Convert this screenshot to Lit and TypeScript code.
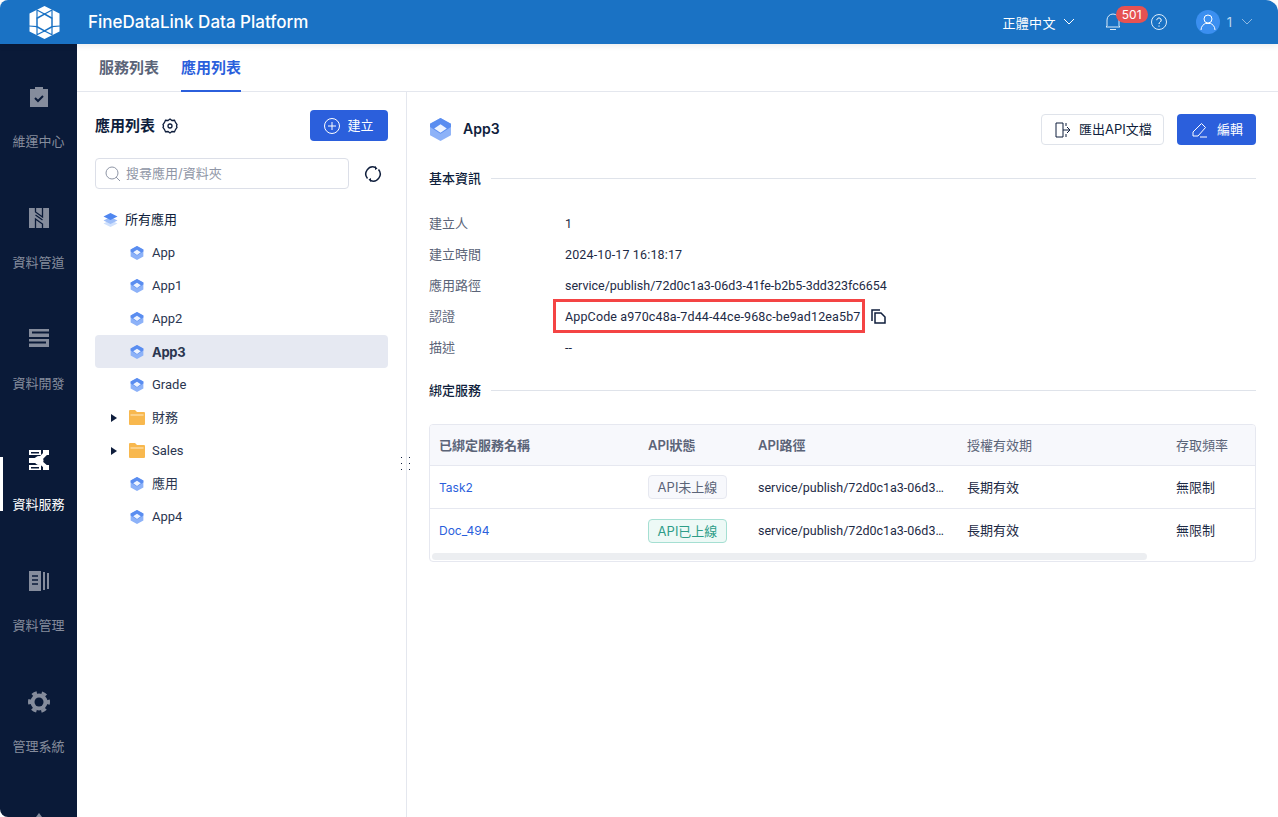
import { LitElement, html, css, svg } from "lit";
import { customElement, state } from "lit/decorators.js";

const cube = (size: number) => html`<svg width=${size} height=${size} viewBox="0 0 22 22">
  <path d="M11 0l10 5.500v11L11 22 1 16.500v-11z" fill="#8db2f8" />
  <path d="M11 0l10 5.500v3L11 15 1 8.500v-3z" fill="#5a8df0" />
  <path d="M11 6l6 4-6 4-6-4z" fill="#eef4ff" />
</svg>`;

const folder = html`<svg width="16" height="15" viewBox="0 0 16 15">
  <path d="M1 0h5l2 2h7a1 1 0 0 1 1 1v11a1 1 0 0 1-1 1H1a1 1 0 0 1-1-1V1a1 1 0 0 1 1-1z" fill="#f8b84e" />
  <rect x="1.500" y="4.500" width="13" height="1" fill="#ffe9c4" />
</svg>`;

const DARK = "#0a1a38";

const navIcons = [
  svg`<path d="M1 2h5V0h8v2h5v18H1z" fill="currentColor"/><path d="M6 11l3 3 5-5" fill="none" stroke=${DARK} stroke-width="2"/>`,
  svg`<rect width="20" height="20" fill="currentColor"/><path d="M6.500 0v4l7 5V0M6.500 20v-9l7 5v4M6.500 7l7 5" stroke=${DARK} stroke-width="1.300" fill="none"/>`,
  svg`<path d="M0 0h20v8H0zM0 10h20v8H0z" fill="currentColor"/><path d="M3 2.500h17v2H3zM0 12.500h17v2H0z" fill=${DARK}/>`,
  svg`<path d="M0 0h12v5H0zM0 8h7v5H0zM0 15h12v5H0z" fill="currentColor"/><path d="M2 2h8v1.500H2zM2 17h8v1.500H2z" fill=${DARK}/><circle cx="10" cy="10.500" r="4.500" fill="currentColor"/><path d="M10 10L17 3M10 11l7 6" stroke="currentColor" stroke-width="4"/><path d="M14 0h6v5h-6zM14 15h6v5h-6z" fill="currentColor"/>`,
  svg`<path d="M0 0h12v20H0zM14 1h2v18h-2zM18 2h2v16h-2z" fill="currentColor"/><path d="M3 5h6M3 9h6M3 13h6" stroke=${DARK} stroke-width="1.500"/>`,
  svg`<circle cx="10" cy="10" r="8.500" fill="currentColor"/><circle cx="10" cy="10" r="9.500" fill="none" stroke="currentColor" stroke-width="3" stroke-dasharray="5 4.950" stroke-dashoffset="2.500"/><circle cx="10" cy="10" r="4.500" fill=${DARK}/>`,
  svg`<path d="M10 0l3 4H7z" fill="currentColor"/>`,
];

const PATH = "service/publish/72d0c1a3-06d3…";

@customElement("app-root")
export class AppRoot extends LitElement {
  static styles = css`
    :host {
      display: block;
      height: 100vh;
      overflow: hidden;
      background: #fff;
      font-family: Inter, "Noto Sans CJK TC", sans-serif;
      font-size: 13px;
      color: #0f1e3c;
    }
    .up {
      margin-top: -2px;
    }
    .top {
      height: 44px;
      background: #1a72c4;
      border-radius: 8px 12px 0 0;
      display: flex;
      align-items: center;
      color: #fff;
      box-shadow: 0 2px 6px rgba(0, 0, 0, 0.08);
      position: relative;
      z-index: 2;
    }
    .logo {
      margin-left: 29px;
      width: 31px;
      height: 33px;
      flex: none;
    }
    .brand {
      margin-left: 28px;
      font-size: 17px;
      font-weight: 500;
      flex: 1;
    }
    .lang {
      font-size: 13px;
      letter-spacing: 0.3px;
    }
    .top svg.chev {
      margin-left: 7px;
    }
    .bell {
      margin-left: 30px;
      position: relative;
      width: 16px;
      height: 18px;
    }
    .badge {
      position: absolute;
      left: 11px;
      top: -7px;
      width: 32px;
      height: 17px;
      border-radius: 9px;
      background: #e65252;
      font-size: 12px;
      line-height: 17px;
      text-align: center;
    }
    .help {
      margin-left: 30px;
    }
    .avatar {
      margin-left: 29px;
      width: 24px;
      height: 24px;
      border-radius: 50%;
      background: #3b8ff0;
    }
    .user {
      margin-left: 7px;
      font-size: 13px;
      color: #bcd6f0;
    }
    .top svg.chev2 {
      margin: 0 25px 0 9px;
    }
    .body {
      display: flex;
      height: 773px;
    }
    .side {
      width: 77px;
      flex: none;
      background: #0a1a38;
      border-bottom-left-radius: 8px;
      overflow: hidden;
      padding-top: 43px;
      box-sizing: border-box;
    }
    .nav {
      position: relative;
      height: 64px;
      margin-bottom: 57px;
      display: flex;
      flex-direction: column;
      align-items: center;
      gap: 24px;
      color: #858c9c;
      font-size: 13px;
      line-height: 20px;
    }
    .nav svg {
      display: block;
      overflow: visible;
    }
    .nav.on {
      color: #fff;
    }
    .nav.on::before {
      content: "";
      position: absolute;
      left: 0;
      top: 7px;
      bottom: 3px;
      width: 3px;
      background: #fff;
    }
    .main {
      flex: 1;
      min-width: 0;
      display: flex;
      flex-direction: column;
    }
    .tabs {
      height: 47px;
      flex: none;
      border-bottom: 1px solid #e4e7ee;
      display: flex;
      gap: 22px;
      padding-left: 22px;
      font-size: 15px;
      font-weight: 600;
      color: #5b6478;
    }
    .tab {
      display: flex;
      align-items: center;
      height: 48px;
      padding-bottom: 2px;
      box-sizing: border-box;
      border-bottom: 2px solid transparent;
    }
    .tab.on {
      color: #2b5fdc;
      border-bottom-color: #2b5fdc;
    }
    .panes {
      flex: 1;
      display: flex;
      min-height: 0;
    }
    .left {
      width: 330px;
      flex: none;
      box-sizing: border-box;
      border-right: 1px solid #e4e7ee;
      padding: 18px 18px 0;
      position: relative;
    }
    .lhead {
      display: flex;
      align-items: center;
      height: 31px;
      font-size: 15px;
      font-weight: 700;
    }
    .lhead svg {
      margin-left: 7px;
    }
    .lhead .btn {
      margin-left: auto;
      width: 78px;
    }
    .btn {
      height: 31px;
      border-radius: 4px;
      display: flex;
      align-items: center;
      justify-content: center;
      gap: 7px;
      font-size: 13px;
      font-weight: 400;
      background: #2b5fdc;
      color: #fff;
      box-sizing: border-box;
    }
    .lhead .btn svg,
    .actions .btn svg {
      margin: 0;
    }
    .btn.ghost {
      background: #fff;
      color: #0f1e3c;
      border: 1px solid #dfe3ea;
      justify-content: flex-start;
      padding-left: 13px;
      gap: 8px;
    }
    .searchrow {
      display: flex;
      align-items: center;
      margin-top: 17px;
      gap: 15px;
    }
    .search {
      width: 254px;
      height: 31px;
      box-sizing: border-box;
      border: 1px solid #dcdfe8;
      border-radius: 4px;
      display: flex;
      align-items: center;
      gap: 5px;
      padding-left: 9px;
      color: #8f96a6;
    }
    .tree {
      margin-top: 14px;
    }
    .row {
      height: 33px;
      display: flex;
      align-items: center;
      border-radius: 4px;
      padding-left: 35px;
      color: #2a3650;
      font-family: Roboto, "Noto Sans CJK TC", sans-serif;
      font-size: 13px;
      gap: 8px;
    }
    .row.root {
      padding-left: 8px;
      gap: 7px;
      font-size: 13px;
      color: #0f1e3c;
    }
    .row.sel {
      background: #e6e9f2;
      font-family: Inter, sans-serif;
      font-weight: 700;
      font-size: 13px;
      letter-spacing: -0.3px;
    }
    .row.dir {
      padding-left: 16px;
      gap: 0;
    }
    .arrow {
      width: 0;
      height: 0;
      border-left: 6px solid #0f1e3c;
      border-top: 4px solid transparent;
      border-bottom: 4px solid transparent;
      margin-right: 12px;
    }
    .row.dir svg {
      margin-right: 7px;
    }
    .grip {
      position: absolute;
      right: -4px;
      top: 365px;
      width: 9px;
      height: 15px;
      background-image: radial-gradient(circle at 0.5px 0.5px, #0f1e3c 0.7px, transparent 0.8px);
      background-size: 8px 6px;
    }
    .right {
      flex: 1;
      min-width: 0;
      padding: 22px 22px 0;
    }
    .head {
      display: flex;
      align-items: center;
      height: 31px;
      gap: 11px;
      font-size: 14px;
      font-weight: 600;
    }
    .actions {
      margin-left: auto;
      display: flex;
      gap: 13px;
    }
    .actions .ghost {
      width: 123px;
    }
    .actions .edit {
      width: 79px;
      justify-content: flex-start;
      padding-left: 15px;
      gap: 9px;
    }
    .sec {
      display: flex;
      align-items: center;
      gap: 10px;
      font-size: 13px;
      font-weight: 500;
      line-height: 20px;
    }
    .sec::after {
      content: "";
      flex: 1;
      height: 1px;
      background: #dfe3ea;
    }
    .sec.first {
      margin-top: 23px;
    }
    .kv {
      margin: 19px 0 0;
      display: grid;
      grid-template-columns: 136px 1fr;
      grid-template-rows: 31px 31px 31px 31px 30px;
      align-items: center;
      font-family: Roboto, "Noto Sans CJK TC", sans-serif;
      font-size: 12.500px;
      color: #1d2a45;
    }
    .kv dt {
      font-family: Inter, "Noto Sans CJK TC", sans-serif;
      font-size: 13px;
      color: #5b6478;
    }
    .kv dd {
      margin: 0;
      padding-top: 2px;
      display: flex;
      align-items: center;
    }
    .date {
      letter-spacing: 0.15px;
    }
    .mark {
      position: relative;
      letter-spacing: 0.14px;
    }
    .mark::after {
      content: "";
      position: absolute;
      left: -12px;
      right: -4px;
      top: -10px;
      bottom: -9px;
      border: 3px solid #f44444;
      pointer-events: none;
    }
    .copy {
      margin-left: 10px;
    }
    .sec.bind {
      margin-top: 19px;
    }
    .table {
      margin-top: 24px;
      border: 1px solid #e6e8f0;
      border-radius: 4px;
      height: 138px;
      box-sizing: border-box;
      overflow: hidden;
      position: relative;
    }
    .tr {
      display: grid;
      grid-template-columns: 209px 110px 209px 209px 1fr;
      align-items: center;
      height: 43px;
      box-sizing: border-box;
      border-bottom: 1px solid #e6e8f0;
      padding-left: 9px;
      font-family: Roboto, "Noto Sans CJK TC", sans-serif;
      font-size: 12.500px;
      color: #1d2a45;
    }
    .tr.last {
      border-bottom: 0;
    }
    .tr.th {
      height: 41px;
      padding-bottom: 2px;
      background: #f7f8fc;
      font-family: Inter, "Noto Sans CJK TC", sans-serif;
      font-size: 13px;
      color: #5b6478;
    }
    .th .b {
      font-weight: 600;
    }
    .tr .zh {
      font-family: Inter, "Noto Sans CJK TC", sans-serif;
      font-size: 13px;
      margin-top: -2px;
    }
    .tr a {
      font-family: Inter, sans-serif;
      color: #2b5fdc;
      font-size: 12px;
    }
    .tag {
      display: inline-block;
      width: 79px;
      height: 24px;
      line-height: 22px;
      text-align: center;
      box-sizing: border-box;
      border: 1px solid #e6e8f0;
      border-radius: 4px;
      background: #f7f8fc;
      color: #5b6478;
      font-family: Inter, "Noto Sans CJK TC", sans-serif;
      font-size: 13px;
    }
    .tag.live {
      border-color: #a5dfd2;
      background: #edf9f6;
      color: #2e9d88;
    }
    .ell {
      white-space: nowrap;
    }
    .bar {
      position: absolute;
      left: 2px;
      bottom: 1px;
      width: 715px;
      height: 7px;
      border-radius: 4px;
      background: #eceef1;
    }
  `;

  @state() nav = ["維運中心", "資料管道", "資料開發", "資料服務", "資料管理", "管理系統", ""];

  render() {
    return html`
      <div class="top">
        <svg class="logo" viewBox="0 0 31 33">
          <path d="M15.500 0l15 7.500v18L15.500 33 .5 25.500v-18z" fill="#fff" />
          <path d="M15.500 8l7.500 4.300v8.400L15.500 25 8 20.700v-8.400z" fill="#fff" stroke="#1a72c4" stroke-width="1.500" />
          <path d="M7.500 3.800L15.500 8l8-4.200M8 12.300V4M23 12.300V4M0 20l8 .7M31 20l-8 .7M7.500 29L15.500 25l8 4M8 20.700V29M23 20.700V29" fill="none" stroke="#1a72c4" stroke-width="1.200" />
        </svg>
        <div class="brand">FineDataLink Data Platform</div>
        <span class="lang">正體中文</span>
        <svg class="chev" width="12" height="8" viewBox="0 0 12 8"><path d="M1 1l5 5 5-5" fill="none" stroke="#fff" /></svg>
        <div class="bell">
          <svg width="16" height="18" viewBox="0 0 16 18"><path d="M2 13V7a6 6 0 0 1 12 0v6l1 1H1zM5 16.500h6" fill="none" stroke="#dcebf8" /></svg>
          <span class="badge">501</span>
        </div>
        <svg class="help" width="16" height="16" viewBox="0 0 16 16">
          <circle cx="8" cy="8" r="7.500" fill="none" stroke="#dcebf8" />
          <path d="M5.800 6.200a2.200 2.200 0 1 1 3.400 1.800C8.400 8.600 8 9 8 10M8 11.500v1.200" fill="none" stroke="#fff" />
        </svg>
        <svg class="avatar" viewBox="0 0 24 24">
          <circle cx="12" cy="9" r="4" fill="none" stroke="#fff" />
          <path d="M5 20c0-4 3-6 4.500-6.500h5C16 14 19 16 19 20" fill="none" stroke="#fff" />
        </svg>
        <span class="user">1</span>
        <svg class="chev2" width="12" height="8" viewBox="0 0 12 8"><path d="M1 1l5 5 5-5" fill="none" stroke="#8fb9e2" /></svg>
      </div>
      <div class="body">
        <nav class="side">
          ${this.nav.map(
            (n, i) => html`<div class="nav ${i === 3 ? "on" : ""}">
              <svg width="20" height="20" viewBox="0 0 20 20">${navIcons[i]}</svg>
              <span>${n}</span>
            </div>`
          )}
        </nav>
        <div class="main">
          <div class="tabs">
            <div class="tab">服務列表</div>
            <div class="tab on">應用列表</div>
          </div>
          <div class="panes">
            <section class="left">
              <div class="lhead">
                <span class="up">應用列表</span>
                <svg width="16" height="16" viewBox="0 0 16 16">
                  <path d="M8 1l2 1.500 2.500-.2 1 2.200L15 6.500 14.500 8l.5 1.500-1.500 2-1 2.200-2.500-.2L8 15l-2-1.500-2.500.2-1-2.200L1 9.500 1.500 8 1 6.500l1.500-2 1-2.200 2.500.2z" fill="none" stroke="#0f1e3c" stroke-width="1.300" />
                  <circle cx="8" cy="8" r="2" fill="none" stroke="#0f1e3c" stroke-width="1.300" />
                </svg>
                <div class="btn">
                  <svg width="16" height="16" viewBox="0 0 16 16"><circle cx="8" cy="8" r="7.500" fill="none" stroke="#fff" /><path d="M8 4v8M4 8h8" stroke="#fff" /></svg>
                  <span class="up">建立</span>
                </div>
              </div>
              <div class="searchrow">
                <div class="search">
                  <svg width="16" height="16" viewBox="0 0 16 16"><circle cx="7" cy="7" r="6" fill="none" stroke="#8f96a6" /><path d="M11 11l4 4" stroke="#8f96a6" /></svg>
                  <span class="up">搜尋應用/資料夾</span>
                </div>
                <svg width="18" height="18" viewBox="0 0 18 18">
                  <path d="M3.500 13.500A7 7 0 0 1 11.500 2.500M14.500 4.500A7 7 0 0 1 6.500 15.500" fill="none" stroke="#0f1e3c" stroke-width="1.500" />
                  <path d="M11 1l2.500 2.500L11 5zM7 17l-2.500-2.500L7 13z" fill="#0f1e3c" />
                </svg>
              </div>
              <div class="tree">
                <div class="row root">
                  <svg width="15" height="14" viewBox="0 0 15 14">
                    <path d="M7.500 5l7 3.500-7 3.500-7-3.500z" fill="#cfe0fc" transform="translate(0 2)" />
                    <path d="M7.500 4l7 3.500-7 3.500-7-3.500z" fill="#9dbdf8" />
                    <path d="M7.500 0l7 3.500-7 3.500-7-3.500z" fill="#4f86f0" />
                  </svg>
                  <span class="up">所有應用</span>
                </div>
                ${["App", "App1", "App2"].map((a) => html`<div class="row">${cube(14)}${a}</div>`)}
                <div class="row sel">${cube(14)}App3</div>
                <div class="row">${cube(14)}Grade</div>
                <div class="row dir"><i class="arrow"></i>${folder}<span class="up">財務</span></div>
                <div class="row dir"><i class="arrow"></i>${folder}Sales</div>
                <div class="row">${cube(14)}<span class="up">應用</span></div>
                <div class="row">${cube(14)}App4</div>
              </div>
              <div class="grip"></div>
            </section>
            <section class="right">
              <div class="head">
                ${cube(23)} <span class="up">App3</span>
                <div class="actions">
                  <div class="btn ghost">
                    <svg width="16" height="16" viewBox="0 0 16 16"><path d="M8 1H1v14h7V1zM11 1v3M11 12v3M8 8h7M12 5l3 3-3 3" fill="none" stroke="#0f1e3c" /></svg>
                    <span class="up">匯出API文檔</span>
                  </div>
                  <div class="btn edit">
                    <svg width="16" height="16" viewBox="0 0 16 16"><path d="M1 14v-4l8.500-8.500 4 4L6 14zM8 15h7" fill="none" stroke="#fff" /></svg>
                    <span class="up">編輯</span>
                  </div>
                </div>
              </div>
              <div class="sec first">基本資訊</div>
              <dl class="kv">
                <dt>建立人</dt><dd>1</dd>
                <dt>建立時間</dt><dd class="date">2024-10-17 16:18:17</dd>
                <dt>應用路徑</dt><dd>service/publish/72d0c1a3-06d3-41fe-b2b5-3dd323fc6654</dd>
                <dt>認證</dt>
                <dd>
                  <span class="mark">AppCode a970c48a-7d44-44ce-968c-be9ad12ea5b7</span>
                  <svg class="copy" width="15" height="15" viewBox="0 0 15 15">
                    <path d="M1 12V1h8" fill="none" stroke="#0f1e3c" stroke-width="1.500" />
                    <path d="M4 4h6l4 4v6H4z" fill="none" stroke="#0f1e3c" stroke-width="1.500" />
                  </svg>
                </dd>
                <dt>描述</dt><dd>--</dd>
              </dl>
              <div class="sec bind">綁定服務</div>
              <div class="table">
                <div class="tr th"><span class="b">已綁定服務名稱</span><span class="b">API狀態</span><span class="b">API路徑</span><span>授權有效期</span><span>存取頻率</span></div>
                <div class="tr">
                  <a>Task2</a><span><span class="tag">API未上線</span></span>
                  <span class="ell">${PATH}</span>
                  <span class="zh">長期有效</span><span class="zh">無限制</span>
                </div>
                <div class="tr last">
                  <a>Doc_494</a><span><span class="tag live">API已上線</span></span>
                  <span class="ell">${PATH}</span>
                  <span class="zh">長期有效</span><span class="zh">無限制</span>
                </div>
                <div class="bar"></div>
              </div>
            </section>
          </div>
        </div>
      </div>
    `;
  }
}
